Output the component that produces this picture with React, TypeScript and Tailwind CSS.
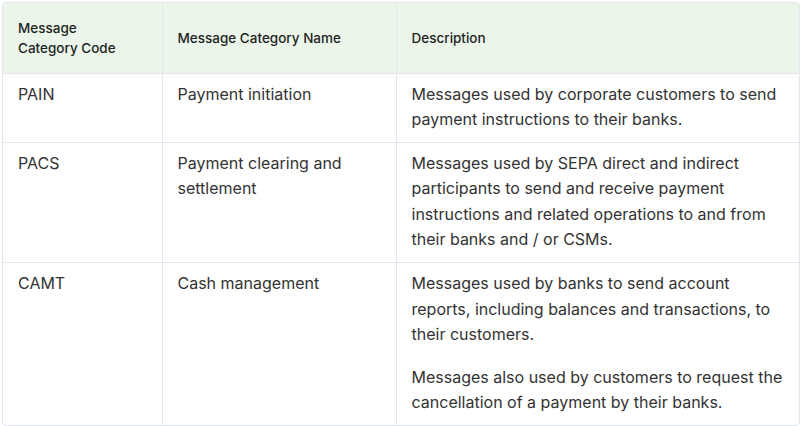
import React from "react";

const rows: { code: string; name: string; desc: string[] }[] = [
  {
    code: "PAIN",
    name: "Payment initiation",
    desc: [
      "Messages used by corporate customers to send payment instructions to their banks.",
    ],
  },
  {
    code: "PACS",
    name: "Payment clearing and settlement",
    desc: [
      "Messages used by SEPA direct and indirect participants to send and receive payment instructions and related operations to and from their banks and / or CSMs.",
    ],
  },
  {
    code: "CAMT",
    name: "Cash management",
    desc: [
      "Messages used by banks to send account reports, including balances and transactions, to their customers.",
      "Messages also used by customers to request the cancellation of a payment by their banks.",
    ],
  },
];

export default function App() {
  return (
    <div
      className="w-[800px] h-[426px] bg-white pl-[2px] pt-[2px]"
      style={{ fontFamily: "Inter, 'Liberation Sans', sans-serif" }}
    >
      <div className="w-[798px] border border-[#e3e6ef] rounded-[4px] overflow-hidden">
        <table className="w-full table-fixed border-collapse">
          <colgroup>
            <col className="w-[159px]" />
            <col className="w-[234px]" />
            <col />
          </colgroup>
          <thead>
            <tr className="bg-[#ebf5ea] h-[70px]">
              <th className="text-left align-middle px-[15px] text-[13.5px] leading-[20px] font-medium text-[#1f1f1f] border-b border-r border-[#e3e6ef]">
                Message
                <br />
                Category Code
              </th>
              <th className="text-left align-middle px-[15px] text-[13.5px] leading-[20px] font-medium text-[#1f1f1f] border-b border-r border-[#e3e6ef]">
                Message Category Name
              </th>
              <th className="text-left align-middle px-[15px] text-[13.5px] leading-[20px] font-medium text-[#1f1f1f] border-b border-[#e3e6ef]">
                Description
              </th>
            </tr>
          </thead>
          <tbody>
            {rows.map((r, i) => {
              const last = i === rows.length - 1;
              const cell = last
                ? "align-top px-[15px] pt-[8px] pb-[9px] text-[16px] leading-[25.6px] text-[#333333] border-[#e3e6ef]"
                : "align-top px-[15px] pt-[8px] pb-[9px] text-[16px] leading-[25.6px] text-[#333333] border-b border-[#e3e6ef]";
              return (
                <tr key={r.code}>
                  <td className={`${cell} border-r`}>{r.code}</td>
                  <td className={`${cell} border-r`}>{r.name}</td>
                  <td className={cell}>
                    <div className="flex flex-col gap-[17px]">
                      {r.desc.map((d, j) => (
                        <p key={j}>{d}</p>
                      ))}
                    </div>
                  </td>
                </tr>
              );
            })}
          </tbody>
        </table>
      </div>
    </div>
  );
}
